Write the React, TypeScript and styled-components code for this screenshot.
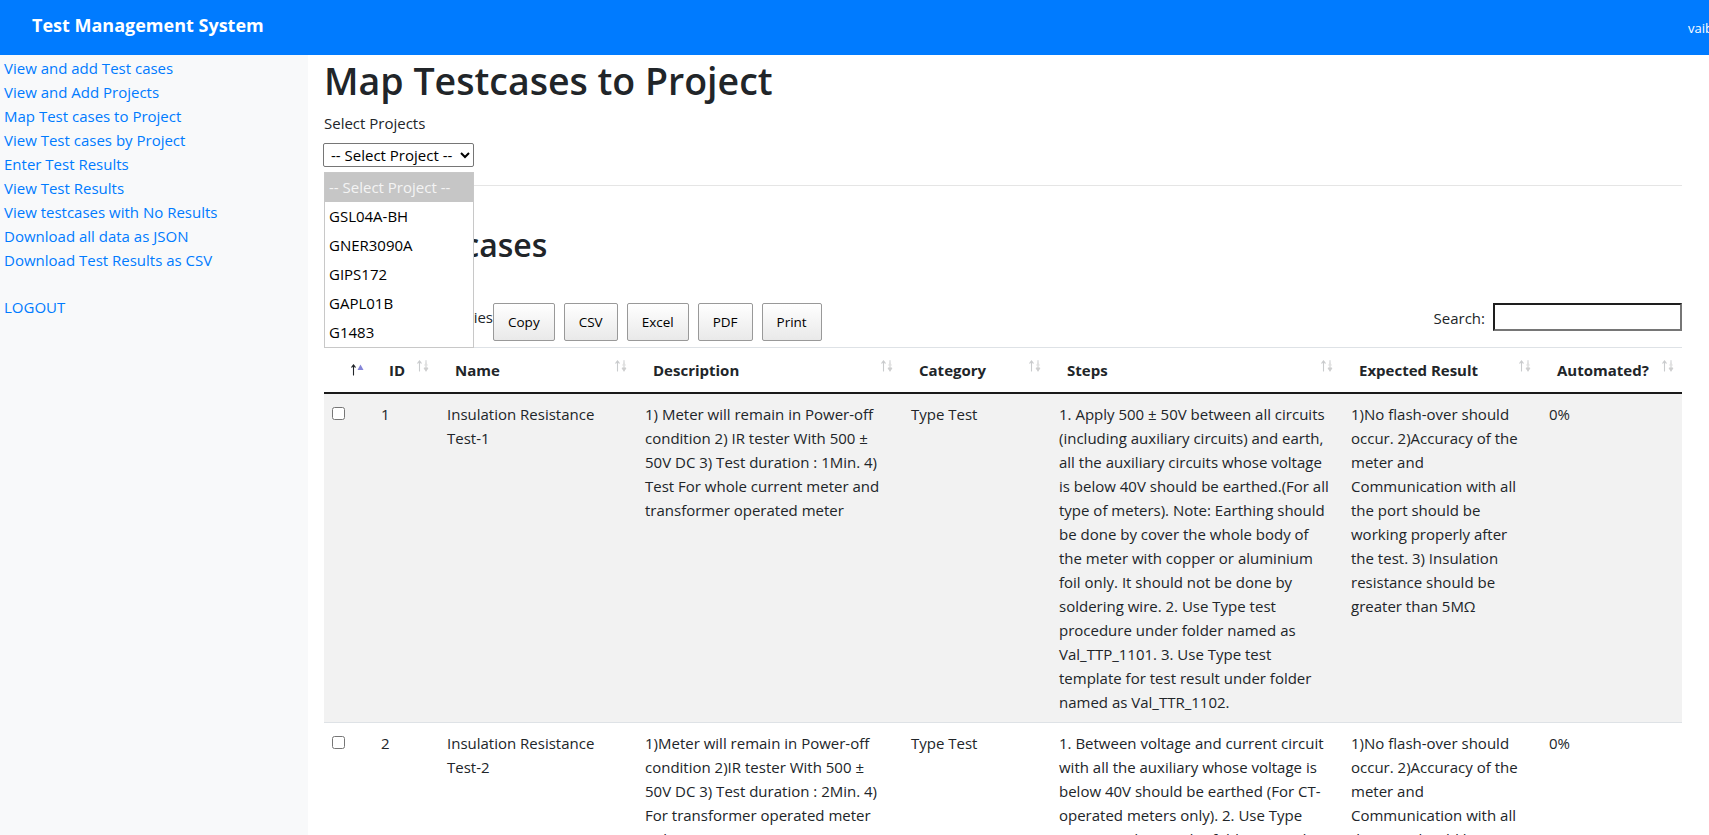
import React from 'react'
import styled, { createGlobalStyle } from 'styled-components'

interface TestCase {
  id: number
  name: string
  description: string
  category: string
  steps: string
  expected: string
  automated: string
}

const PROJECTS = ['GSL04A-BH', 'GNER3090A', 'GIPS172', 'GAPL01B', 'G1483']

const NAV_LINKS = [
  'View and add Test cases',
  'View and Add Projects',
  'Map Test cases to Project',
  'View Test cases by Project',
  'Enter Test Results',
  'View Test Results',
  'View testcases with No Results',
  'Download all data as JSON',
  'Download Test Results as CSV',
]

const COLUMNS = ['', 'ID', 'Name', 'Description', 'Category', 'Steps', 'Expected Result', 'Automated?']
const COL_WIDTHS = [47, 66, 198, 266, 148, 292, 198, 143]

const TESTCASES: TestCase[] = [
  {
    id: 1,
    name: 'Insulation Resistance Test-1',
    description:
      '1) Meter will remain in Power-off condition 2) IR tester With 500 ± 50V DC 3) Test duration : 1Min. 4) Test For whole current meter and transformer operated meter',
    category: 'Type Test',
    steps:
      '1. Apply 500 ± 50V between all circuits (including auxiliary circuits) and earth, all the auxiliary circuits whose voltage is below 40V should be earthed.(For all type of meters). Note: Earthing should be done by cover the whole body of the meter with copper or aluminium foil only. It should not be done by soldering wire. 2. Use Type test procedure under folder named as Val_TTP_1101. 3. Use Type test template for test result under folder named as Val_TTR_1102.',
    expected:
      '1)No flash-over should occur. 2)Accuracy of the meter and Communication with all the port should be working properly after the test. 3) Insulation resistance should be greater than 5MΩ',
    automated: '0%',
  },
  {
    id: 2,
    name: 'Insulation Resistance Test-2',
    description:
      '1)Meter will remain in Power-off condition 2)IR tester With 500 ± 50V DC 3) Test duration : 2Min. 4) For transformer operated meter only',
    category: 'Type Test',
    steps:
      '1. Between voltage and current circuit with all the auxiliary whose voltage is below 40V should be earthed (For CT-operated meters only). 2. Use Type test procedure under folder named as Val_TTP_1101. 3. Use Type test template for test result under folder named as Val_TTR_1102.',
    expected:
      '1)No flash-over should occur. 2)Accuracy of the meter and Communication with all the port should be working properly after the test. 3) Insulation resistance should be greater than 5MΩ',
    automated: '0%',
  },
]

const GlobalStyle = createGlobalStyle`
  * { box-sizing: border-box; }
  html, body {
    margin: 0;
    padding: 0;
    overflow: hidden;
  }
  body {
    font-family: "Open Sans", "Noto Sans", sans-serif;
    font-size: 15px;
    line-height: 24px;
    color: #212529;
    background: #fff;
  }
`

const Navbar = styled.nav`
  height: 55px;
  background: #007bff;
  display: flex;
  align-items: center;
  padding-left: 32px;
  overflow: hidden;
`

const Brand = styled.span`
  color: #fff;
  font-size: 18px;
  font-weight: 700;
  line-height: 30px;
  margin-top: -6px;
`

const UserName = styled.span`
  margin-left: auto;
  flex: 0 0 21px;
  overflow: hidden;
  white-space: nowrap;
  color: #fff;
  font-size: 13px;
  line-height: 20px;
`

const Layout = styled.div`
  display: flex;
  align-items: stretch;
  min-height: 780px;
`

const Sidebar = styled.aside`
  flex: 0 0 308px;
  background: #f8f9fa;
  padding: 1px 4px 0;
`

const SideLink = styled.a<{ $gap?: boolean }>`
  display: block;
  color: #007bff;
  text-decoration: none;
  line-height: 24px;
  margin-top: ${({ $gap }) => ($gap ? '23px' : '0')};
`

const Main = styled.main`
  flex: 1;
  min-width: 0;
  padding: 0 27px 0 16px;
`

const Title = styled.h1`
  font-size: 37.5px;
  font-weight: 600;
  line-height: 45px;
  margin: 3px 0 8px;
  color: #212529;
`

const FieldLabel = styled.div`
  line-height: 24px;
`

const SelectWrap = styled.div`
  position: relative;
  margin-top: 8px;
  height: 24px;
  z-index: 5;
`

const ProjectSelect = styled.select`
  width: 151px;
  height: 24px;
  margin-left: -1px;
  font-family: inherit;
  font-size: 15px;
  color: #000;
  background: #fff;
  border: 1px solid #767676;
  border-radius: 2px;
  padding: 0 0 0 3px;
`

const Popup = styled.ul`
  position: absolute;
  top: 29px;
  left: 0;
  width: 150px;
  margin: 0;
  padding: 0;
  list-style: none;
  background: #fff;
  border: 1px solid #c8c8c8;
`

const PopupOption = styled.li<{ $selected?: boolean }>`
  height: 29px;
  line-height: 29px;
  padding-left: 4px;
  white-space: nowrap;
  color: ${({ $selected }) => ($selected ? '#f4f4f4' : '#000')};
  background: ${({ $selected }) => ($selected ? '#c6c6c6' : '#fff')};
`

const Rule = styled.hr`
  border: 0;
  border-top: 1px solid rgba(0, 0, 0, 0.1);
  margin: 18px 0 0;
`

const SubTitle = styled.h2`
  font-size: 32px;
  font-weight: 600;
  line-height: 38px;
  margin: 40px 0 0;
  color: #212529;
`

const Toolbar = styled.div`
  display: flex;
  align-items: flex-start;
  margin-top: 39px;
  height: 44px;
`

const LengthLabel = styled.label`
  flex: 0 0 169px;
  text-align: right;
  padding-top: 2px;
  white-space: nowrap;
`

const ButtonGroup = styled.div`
  display: flex;
  gap: 9px;
`

const ExportButton = styled.button`
  height: 38px;
  padding: 0 14px;
  font-family: inherit;
  font-size: 13.5px;
  color: #000;
  border: 1px solid #999;
  border-radius: 2px;
  background: linear-gradient(to bottom, #fff 0%, #e9e9e9 100%);
`

const SearchLabel = styled.label`
  margin-left: auto;
  display: flex;
  align-items: center;
  gap: 8px;
  height: 28px;
  padding-top: 2px;
`

const SearchInput = styled.input`
  width: 189px;
  height: 28px;
  margin-top: -2px;
  border-style: solid;
  border-width: 2px;
  border-color: #1e1e1e #767676 #767676 #1e1e1e;
  padding: 1px 4px;
  font-family: inherit;
  font-size: 15px;
`

const Table = styled.table`
  width: 1358px;
  table-layout: fixed;
  border-collapse: collapse;
  border-top: 1px solid #dee2e6;
`

const HeadCell = styled.th`
  padding: 10px 7px 10px 18px;
  text-align: left;
  font-weight: 700;
  border-bottom: 2px solid #1a1a1a;
  white-space: nowrap;
`

const HeadInner = styled.div`
  display: flex;
  align-items: flex-start;
`

const SortIcon = styled.svg`
  flex: 0 0 14px;
  margin-left: auto;
`

const Row = styled.tr<{ $striped?: boolean }>`
  background: ${({ $striped }) => ($striped ? '#f2f2f2' : '#fff')};
  border-top: 1px solid #dee2e6;
`

const Cell = styled.td<{ $narrow?: boolean }>`
  padding: ${({ $narrow }) => ($narrow ? '8px 4px' : '8px 10px')};
  vertical-align: top;
`

const Check = styled.input`
  margin: 4px 3px 3px 4px;
  width: 13px;
  height: 13px;
`

const Sorter: React.FC<{ active?: boolean }> = ({ active }) => (
  <SortIcon width="14" height="16" viewBox="0 0 14 16" aria-hidden>
    <g fill="none" strokeWidth="1.1" strokeLinecap="round">
      <path d="M3.5 3v10M1.8 5.2 3.5 3l1.7 2.2" stroke={active ? '#212529' : '#c9cbcd'} />
      {!active && <path d="M10 2.5v10M8.3 10.3 10 12.5l1.7-2.2" stroke="#d0d2d4" />}
    </g>
    {active ? (
      <path d="M7.5 8h6L10.5 2.5z" fill="#8585d8" />
    ) : (
      <>
        <path d="M8 7.5h4L10 4z" fill="#e0e0e0" />
        <path d="M8 9.5h4L10 14z" fill="#cfcfcf" />
      </>
    )}
  </SortIcon>
)

const App: React.FC = () => {
  return (
    <>
      <GlobalStyle />
      <Navbar>
        <Brand>Test Management System</Brand>
        <UserName>vaibhav</UserName>
      </Navbar>
      <Layout>
        <Sidebar>
          {NAV_LINKS.map((l) => (
            <SideLink key={l} href="#">{l}</SideLink>
          ))}
          <SideLink href="#" $gap>LOGOUT</SideLink>
        </Sidebar>

        <Main>
          <Title>Map Testcases to Project</Title>
          <FieldLabel>Select Projects</FieldLabel>
          <SelectWrap>
            <ProjectSelect defaultValue="">
              <option value="">-- Select Project --</option>
              {PROJECTS.map((p) => (
                <option key={p} value={p}>{p}</option>
              ))}
            </ProjectSelect>
            <Popup role="listbox">
              <PopupOption $selected>-- Select Project --</PopupOption>
              {PROJECTS.map((p) => (
                <PopupOption key={p}>{p}</PopupOption>
              ))}
            </Popup>
          </SelectWrap>
          <Rule />

          <SubTitle>Find Testcases</SubTitle>

          <Toolbar>
            <LengthLabel>Show 10 entries</LengthLabel>
            <ButtonGroup>
              {['Copy', 'CSV', 'Excel', 'PDF', 'Print'].map((b) => (
                <ExportButton key={b}>{b}</ExportButton>
              ))}
            </ButtonGroup>
            <SearchLabel>
              Search:
              <SearchInput type="search" />
            </SearchLabel>
          </Toolbar>

          <Table>
            <colgroup>
              {COL_WIDTHS.map((w, i) => (
                <col key={i} style={{ width: w }} />
              ))}
            </colgroup>
            <thead>
              <tr>
                {COLUMNS.map((c, i) => (
                  <HeadCell key={i}>
                    <HeadInner>
                      {c}
                      <Sorter active={i === 0} />
                    </HeadInner>
                  </HeadCell>
                ))}
              </tr>
            </thead>
            <tbody>
              {TESTCASES.map((t, i) => (
                <Row key={t.id} $striped={i % 2 === 0}>
                  <Cell $narrow>
                    <Check type="checkbox" />
                  </Cell>
                  <Cell>{t.id}</Cell>
                  <Cell>{t.name}</Cell>
                  <Cell>{t.description}</Cell>
                  <Cell>{t.category}</Cell>
                  <Cell>{t.steps}</Cell>
                  <Cell>{t.expected}</Cell>
                  <Cell>{t.automated}</Cell>
                </Row>
              ))}
            </tbody>
          </Table>
        </Main>
      </Layout>
    </>
  )
}

export default App
